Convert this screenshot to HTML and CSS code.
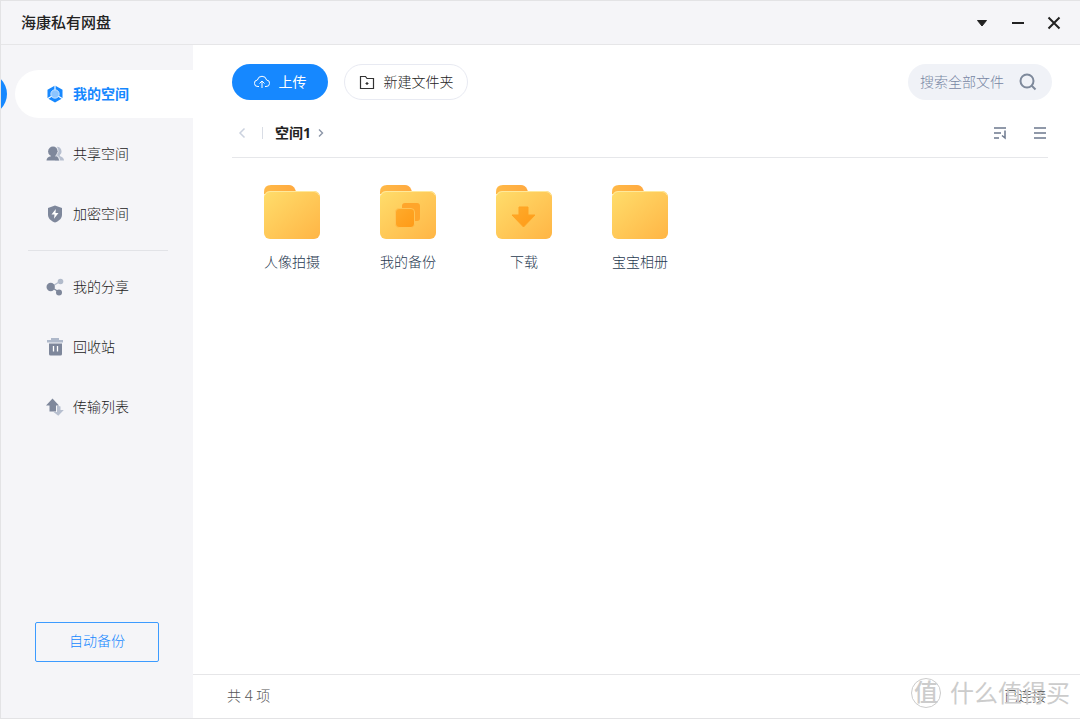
FILE: index.html
```html
<!DOCTYPE html>
<html lang="zh-CN">
<head>
<meta charset="utf-8">
<meta name="viewport" content="width=device-width, initial-scale=1">
<title>海康私有网盘</title>
<link rel="stylesheet" href="styles.css">
</head>
<body>
<svg class="defs" width="0" height="0" aria-hidden="true">
  <defs>
    <linearGradient id="front" x1="0" y1="0" x2="1" y2="1"><stop offset="0" stop-color="#ffdd6b"/><stop offset="1" stop-color="#ffb545"/></linearGradient>
    <linearGradient id="back" x1="0" y1="0" x2="1" y2="0"><stop offset="0" stop-color="#ffb947"/><stop offset="1" stop-color="#ffa940"/></linearGradient>
    <linearGradient id="mark" x1="0" y1="0" x2="1" y2="1"><stop offset="0" stop-color="#ffab2b"/><stop offset="1" stop-color="#ff9a16"/></linearGradient>
    <symbol id="folder" viewBox="0 0 58 54">
      <path d="M1 7q0-7 7-7h18q4 0 6 4l2 5H1z" fill="url(#back)"/>
      <rect x="1" y="6" width="56" height="48" rx="6" fill="url(#front)"/>
      <path d="M2 10q1-3.500 5-3.500h44q4 0 5 3.500" fill="none" stroke="#ffe99b"/>
    </symbol>
  </defs>
</svg>
<div class="window">
  <header class="titlebar">
    <h1 class="title">海康私有网盘</h1>
    <div class="controls">
      <button class="control" aria-label="菜单"><svg width="16" height="16" viewBox="0 0 16 16"><path d="M3.500 5.500h9L8 11z" fill="#222" stroke="#222" stroke-linejoin="round"/></svg></button>
      <button class="control" aria-label="最小化"><svg width="16" height="16" viewBox="0 0 16 16"><path d="M2 8h12" stroke="#222" stroke-width="2"/></svg></button>
      <button class="control" aria-label="关闭"><svg width="16" height="16" viewBox="0 0 16 16"><path d="M2.500 2.500l11 11M13.500 2.500l-11 11" stroke="#222" stroke-width="2"/></svg></button>
    </div>
  </header>
  <div class="body">
    <aside class="sidebar">
      <nav class="nav">
        <a class="item active" href="#"><svg class="icon" viewBox="0 0 18 18"><path d="M9 .5l7.500 4.200v8.600L9 17.500l-7.500-4.200V4.700z" fill="#1688ff"/><path d="M9 0v6M1 14l5-3M17 14l-5-3" stroke="#fff" stroke-width="1.200"/><circle cx="9" cy="9" r="4.200" fill="#8bc4ff" stroke="#d8ebff" stroke-width=".8"/></svg>我的空间</a>
        <a class="item" href="#"><svg class="icon" viewBox="0 0 18 18"><path d="M11 1.800a4.600 4.600 0 0 1 3 8c-.5.600-.2 1.300.6 1.600 2 .6 3.400 1.700 3.400 4.100H9z" fill="#b7bfcf"/><circle cx="7" cy="6.500" r="4.900" fill="#7e879b"/><path d="M5 9h4v2.200c3 .5 4 1.800 4 4.300H.5c0-2.500 1.500-3.800 4.500-4.300z" fill="#7e879b"/><path d="M11.200 2.500q2.200 4-.7 7.800 3 1.200 3.200 5.200" fill="none" stroke="#f5f5f8" stroke-width=".8"/></svg>共享空间</a>
        <a class="item" href="#"><svg class="icon" viewBox="0 0 18 18"><path d="M9 .5l7 2.600v6.400c0 4-3 6.500-7 8-4-1.500-7-4-7-8V3.100z" fill="#7e879b"/><path d="M9.800 4L5.500 9.500h3L8 13.700l4.500-5.600h-3z" fill="#fff"/></svg>加密空间</a>
        <hr class="split">
        <a class="item" href="#"><svg class="icon" viewBox="0 0 18 18"><path d="M5 9l9-5.500" stroke="#b2bbcb" stroke-width="1.300"/><path d="M5 9l8 5" stroke="#7e879b" stroke-width="1.300"/><circle cx="14.500" cy="3.500" r="2.800" fill="#b2bbcb"/><circle cx="4.700" cy="9" r="4.200" fill="#7e879b"/><circle cx="13" cy="14.500" r="3" fill="#7e879b"/></svg>我的分享</a>
        <a class="item" href="#"><svg class="icon" viewBox="0 0 18 18"><path d="M5 0h8v2h4v2.500H1V2h4z" fill="#aeb8ca"/><path d="M3 5.500h13V16q0 1.500-1.500 1.500h-10Q3 17.500 3 16z" fill="#7e879b"/><path d="M7.500 8v5.500M11.500 8v5.500" stroke="#fff" stroke-width="1.300"/></svg>回收站</a>
        <a class="item" href="#"><svg class="icon" viewBox="0 0 18 18"><path d="M11 7.500l3.500 1V12h3.300l-5.500 5.800L7.500 14H11z" fill="#b7bfcf"/><path d="M6.500.5l6.500 7H10v6H3.500v-6H0z" fill="#7e879b"/></svg>传输列表</a>
      </nav>
      <button class="backup">自动备份</button>
    </aside>
    <main class="main">
      <div class="toolbar">
        <button class="pill primary"><svg width="16" height="16" viewBox="0 0 16 16" fill="none" stroke="#fff"><path d="M5 12.500H4A3.200 3.200 0 0 1 3.400 6a4.700 4.700 0 0 1 9.200 0A3.200 3.200 0 0 1 12 12.500h-1M8 14V7.500M5.500 9.500L8 7l2.500 2.500"/></svg>上传</button>
        <button class="pill plain"><svg width="16" height="16" viewBox="0 0 16 16" fill="none" stroke="#333" stroke-width="1.200"><path d="M1.500 2.500h5l1.500 2h6.500v10h-13zM8 8v3M6.500 9.500h3"/></svg>新建文件夹</button>
        <label class="search"><input class="query" type="text" placeholder="搜索全部文件" aria-label="搜索全部文件"><svg width="18" height="18" viewBox="0 0 18 18" fill="none" stroke="#7e899b" stroke-width="2"><circle cx="8" cy="8" r="6.500"/><path d="M12.500 12.500l4 4"/></svg></label>
      </div>
      <div class="pathbar">
        <button class="tool" aria-label="返回"><svg width="8" height="12" viewBox="0 0 8 12" fill="none" stroke="#cbd2df" stroke-width="1.500"><path d="M6.500 1.500L2 6l4.500 4.500"/></svg></button>
        <span class="bar"></span>
        <a class="crumb" href="#">空间1</a>
        <svg width="6" height="10" viewBox="0 0 6 10" fill="none" stroke="#8b95a7" stroke-width="1.400"><path d="M1 1.500L4.500 5 1 8.500"/></svg>
        <div class="views">
          <button class="tool" aria-label="排序"><svg width="16" height="16" viewBox="0 0 16 16" fill="none" stroke="#6c788d" stroke-width="1.500"><path d="M2 3h12M2 8h7M2 13h5M13 5.500V13L10 10.500"/></svg></button>
          <button class="tool" aria-label="列表视图"><svg width="16" height="16" viewBox="0 0 16 16" stroke="#6c788d" stroke-width="1.500"><path d="M2 3h12M2 8h12M2 13h12"/></svg></button>
        </div>
      </div>
      <div class="files">
        <a class="file" href="#"><svg width="58" height="54"><use href="#folder"/></svg>人像拍摄</a>
        <a class="file" href="#"><svg width="58" height="54" viewBox="0 0 58 54"><use href="#folder"/><rect x="23" y="18" width="18" height="18" rx="3" fill="#ffa52b"/><rect x="16.500" y="23.500" width="19" height="19" rx="3.500" fill="url(#mark)" stroke="#ffc354"/></svg>我的备份</a>
        <a class="file" href="#"><svg width="58" height="54" viewBox="0 0 58 54"><use href="#folder"/><path d="M24 22h9v8h7L28.500 42 17 30h7z" fill="url(#mark)" stroke="#ffa322" stroke-linejoin="round"/></svg>下载</a>
        <a class="file" href="#"><svg width="58" height="54"><use href="#folder"/></svg>宝宝相册</a>
      </div>
      <footer class="status"><span>共 4 项</span><span class="state">已连接</span></footer>
    </main>
  </div>
  <div class="watermark"><span class="seal">值</span>什么值得买</div>
</div>
</body>
</html>
```
FILE: styles.css
```css
* { box-sizing: border-box; }
body {
  margin: 0;
  font: 300 14px/20px "Noto Sans", "Noto Sans CJK SC", sans-serif;
  color: #222;
}
button, input { font: inherit; color: inherit; }
button { padding: 0; border: 0; background: none; cursor: pointer; }
a { color: inherit; text-decoration: none; }
svg { display: block; flex: none; }
.defs { position: absolute; }
.window {
  position: relative;
  display: flex;
  flex-direction: column;
  min-height: 100vh;
  border: 1px solid #e3e3e5;
  border-right: 0;
  background: #fff;
}
.titlebar {
  display: flex;
  align-items: center;
  justify-content: space-between;
  height: 44px;
  padding: 0 18px 0 20px;
  border-bottom: 1px solid #e6e6e8;
  background: #f5f5f8;
}
.title { margin: 0; padding-bottom: 2px; font-size: 15px; font-weight: 500; color: #222; }
.controls { display: flex; gap: 20px; }
.body { display: flex; flex: 1; }
.sidebar {
  display: flex;
  flex-direction: column;
  flex: 0 0 192px;
  justify-content: space-between;
  padding: 25px 0 56px;
  background: #f5f5f8;
}
.nav { display: flex; flex-direction: column; gap: 12px; overflow: hidden; }
.item {
  position: relative;
  display: flex;
  align-items: center;
  gap: 9px;
  height: 48px;
  margin-left: 14px;
  padding-left: 31px;
}
.icon { width: 18px; height: 18px; }
.active {
  border-radius: 24px 0 0 24px;
  background: #fff;
  color: #1688ff;
  font-weight: 700;
}
.active::before {
  content: "";
  position: absolute;
  left: -50px;
  top: 3px;
  width: 42px;
  height: 42px;
  border-radius: 50%;
  background: #1688ff;
}
.split { width: 140px; height: 1px; margin: 0 0 0 27px; border: 0; background: #e2e3e7; }
.backup {
  width: 124px;
  height: 40px;
  margin-left: 34px;
  padding-bottom: 2px;
  border: 1px solid #3c9bff;
  border-radius: 2px;
  color: #1688ff;
}
.main { display: flex; flex: 1; flex-direction: column; min-width: 0; }
.toolbar { display: flex; gap: 16px; padding: 19px 28px 0 39px; }
.pill {
  display: flex;
  align-items: center;
  justify-content: center;
  gap: 9px;
  height: 36px;
  border-radius: 18px;
}
.primary { width: 96px; background: #1688ff; color: #fff; font-weight: 400; }
.plain { width: 124px; border: 1px solid #e8eaf2; }
.search {
  display: flex;
  align-items: center;
  gap: 10px;
  width: 144px;
  height: 36px;
  margin-left: auto;
  padding: 0 15px 0 12px;
  border-radius: 18px;
  background: #f0f2f7;
}
.query { flex: 1; min-width: 88px; padding: 0; border: 0; outline: 0; background: none; }
.query::placeholder { color: #7786a3; opacity: 1; }
.pathbar {
  display: flex;
  align-items: center;
  gap: 7px;
  height: 58px;
  margin: 0 32px 0 39px;
  padding: 8px 0 0 6px;
  border-bottom: 1px solid #e6e7ea;
}
.bar { width: 1px; height: 12px; margin: 0 5px 0 9px; background: #d9dde5; }
.crumb { font-weight: 700; color: #222; }
.views { display: flex; gap: 24px; margin-left: auto; }
.files { display: flex; flex: 1; flex-wrap: wrap; align-content: flex-start; padding: 27px 0 0 41px; }
.file {
  display: flex;
  flex-direction: column;
  align-items: center;
  gap: 13px;
  width: 116px;
  color: #1f3950;
}
.status {
  display: flex;
  align-items: center;
  justify-content: space-between;
  height: 44px;
  padding: 0 34px 2px;
  border-top: 1px solid #e6e6e8;
  color: #555;
}
.state { color: #444; }
.watermark {
  position: absolute;
  right: 10px;
  bottom: 9px;
  display: flex;
  align-items: center;
  gap: 9px;
  font-size: 24px;
  line-height: 32px;
  font-weight: 400;
  color: #ccc;
  pointer-events: none;
}
.seal {
  width: 30px;
  height: 30px;
  border: 1px solid #ccc;
  border-radius: 50%;
  font-size: 24px;
  font-weight: 500;
  line-height: 26px;
  text-align: center;
}
```
